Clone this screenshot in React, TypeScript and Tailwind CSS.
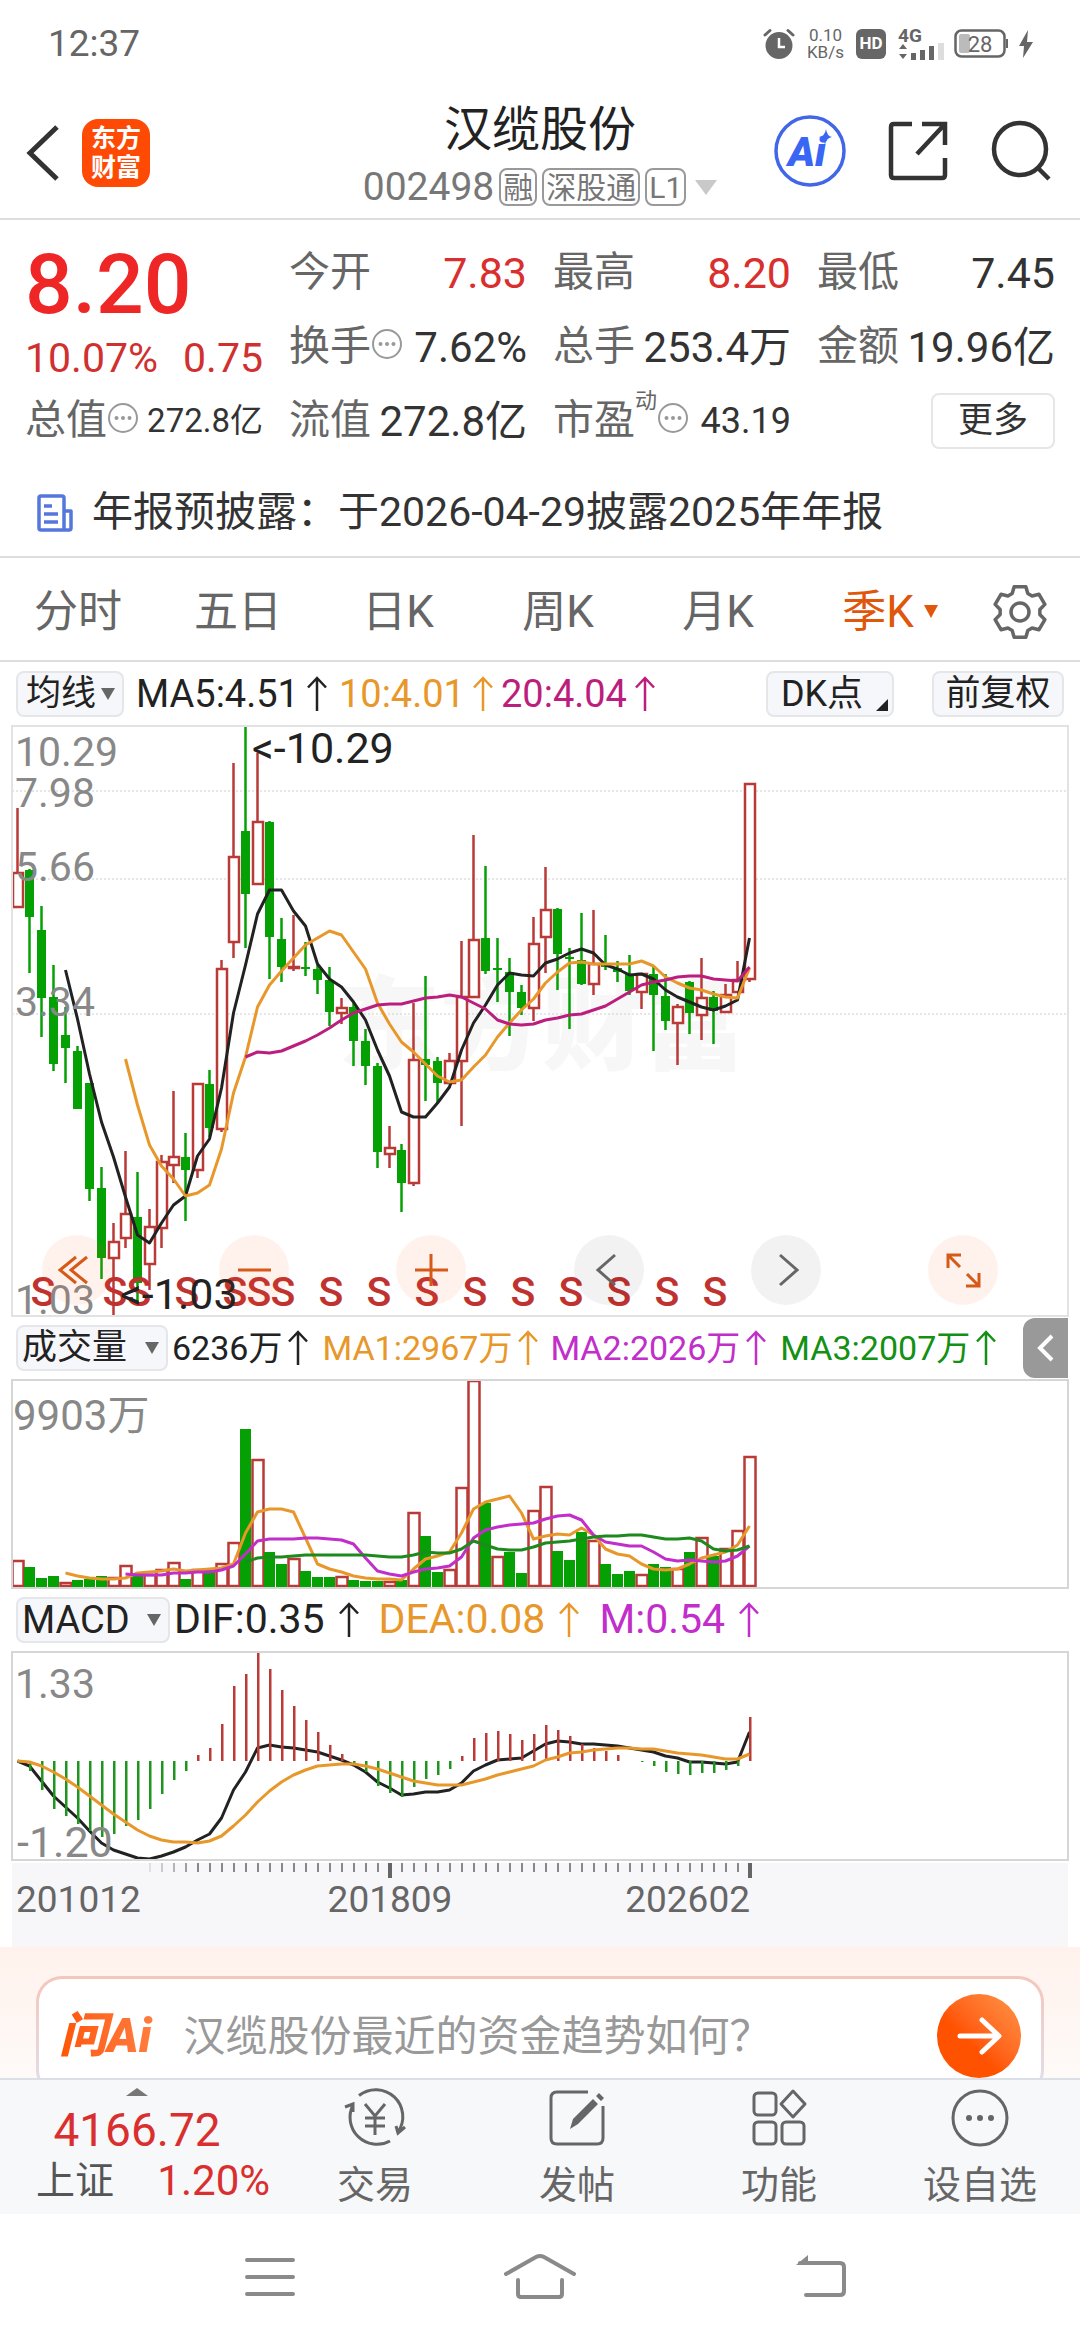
import React from "react";

// [high, body top, body bottom, low, rising]
const candles: [number, number, number, number, 0 | 1][] = [
  [82, 147, 181, 181, 1], [143, 144, 191, 247, 0], [180, 204, 272, 311, 0], [239, 271, 338, 345, 0],
  [281, 309, 322, 357, 0], [320, 325, 383, 383, 0], [357, 357, 463, 475, 0], [441, 462, 532, 553, 0],
  [497, 516, 532, 590, 1], [425, 488, 512, 522, 1], [446, 491, 557, 576, 0], [483, 501, 538, 564, 1],
  [429, 436, 502, 522, 1], [365, 431, 439, 457, 1], [407, 431, 444, 495, 0], [358, 358, 444, 452, 1],
  [344, 358, 402, 411, 0], [234, 243, 403, 406, 1], [37, 131, 216, 232, 1], [0, 105, 168, 222, 0],
  [27, 96, 158, 158, 1], [95, 96, 211, 253, 0], [192, 213, 241, 256, 0], [189, 241, 242, 245, 1],
  [216, 241, 243, 250, 0], [239, 243, 254, 268, 0], [241, 254, 286, 300, 0], [272, 282, 287, 298, 1],
  [277, 281, 315, 340, 0], [303, 315, 340, 359, 0], [337, 340, 426, 442, 0], [400, 422, 428, 442, 1],
  [418, 424, 457, 486, 0], [277, 334, 457, 460, 1], [250, 333, 339, 375, 0], [331, 335, 357, 377, 0],
  [327, 335, 357, 357, 1], [215, 271, 335, 400, 1], [109, 214, 271, 272, 1], [140, 212, 245, 248, 0],
  [212, 242, 244, 276, 0], [232, 246, 266, 310, 0], [259, 266, 282, 289, 0], [191, 218, 282, 295, 1],
  [141, 184, 211, 247, 1], [182, 183, 228, 264, 0], [222, 231, 233, 303, 0], [187, 234, 258, 259, 0],
  [184, 238, 258, 269, 1], [209, 238, 241, 244, 0], [235, 242, 246, 256, 0], [229, 248, 265, 269, 0],
  [247, 248, 266, 283, 1], [241, 248, 269, 325, 0], [248, 270, 295, 304, 0], [278, 281, 297, 339, 1],
  [255, 256, 287, 308, 0], [232, 272, 289, 314, 1], [265, 271, 285, 318, 0], [258, 269, 286, 287, 1],
  [235, 254, 266, 267, 1], [58, 58, 253, 256, 1],
];

const ma5 = [244, 293, 348, 396, 431, 471, 509, 517, 497, 479, 470, 430, 413, 362, 287, 239, 188, 164, 164, 185, 200, 238, 253, 261, 276, 294, 324, 350, 386, 391, 391, 377, 361, 324, 297, 279, 259, 247, 249, 250, 237, 233, 227, 223, 227, 239, 243, 249, 248, 253, 264, 271, 276, 281, 284, 280, 274, 212];
const ma10 = [333, 379, 419, 440, 453, 470, 467, 459, 423, 367, 331, 281, 259, 245, 232, 219, 212, 205, 209, 226, 243, 277, 298, 316, 326, 338, 350, 356, 354, 341, 329, 311, 297, 284, 273, 257, 246, 237, 236, 238, 238, 238, 238, 235, 240, 251, 257, 262, 264, 268, 271, 272, 242];
const ma20 = [331, 326, 327, 325, 320, 315, 309, 302, 294, 287, 283, 279, 278, 278, 275, 272, 271, 269, 271, 277, 283, 294, 298, 299, 298, 294, 292, 289, 288, 284, 280, 273, 266, 259, 256, 254, 251, 250, 250, 253, 254, 255, 241];

const sellMarks = [43, 115, 139, 187, 235, 259, 283, 331, 379, 427, 475, 523, 571, 619, 667, 715];

const volumes = [28, 21, 10, 12, 6, 8, 9, 12, 11, 23, 14, 14, 19, 26, 9, 19, 18, 25, 46, 159, 129, 36, 24, 30, 17, 11, 11, 12, 8, 7, 7, 7, 8, 76, 52, 16, 19, 101, 208, 85, 32, 36, 15, 78, 102, 37, 28, 56, 48, 24, 14, 17, 14, 24, 21, 20, 36, 51, 32, 40, 58, 132];
const volumeUp = [0, 4, 8, 9, 11, 12, 13, 15, 17, 18, 20, 23, 27, 31, 33, 36, 37, 38, 40, 43, 44, 48, 52, 55, 57, 59, 60, 61];
const vol1 = [193, 196, 198, 199, 199, 198, 193, 192, 191, 189, 191, 190, 189, 188, 184, 153, 132, 129, 129, 132, 158, 184, 189, 192, 196, 198, 199, 199, 200, 189, 179, 176, 172, 153, 129, 122, 119, 116, 133, 159, 156, 154, 155, 148, 155, 169, 174, 176, 184, 189, 190, 189, 184, 178, 175, 172, 165, 146];
const vol2 = [194, 195, 195, 195, 193, 193, 192, 192, 190, 186, 174, 161, 159, 159, 159, 158, 158, 159, 160, 164, 178, 191, 194, 196, 192, 189, 188, 186, 177, 158, 150, 147, 145, 144, 143, 139, 136, 135, 140, 155, 162, 164, 166, 166, 172, 179, 181, 180, 181, 182, 181, 176, 166];
const vol3 = [182, 178, 177, 177, 176, 175, 175, 175, 175, 175, 175, 176, 177, 177, 175, 172, 173, 173, 169, 161, 165, 169, 170, 170, 167, 163, 162, 161, 159, 157, 156, 156, 155, 155, 157, 159, 159, 158, 161, 169, 171, 170, 166];

const macd = [0, -10, -29, -48, -55, -63, -70, -76, -73, -65, -59, -48, -33, -19, -10, 6, 13, 37, 75, 87, 109, 92, 71, 55, 41, 29, 16, 7, -3, -11, -25, -32, -36, -26, -18, -14, -8, 5, 23, 28, 30, 27, 21, 27, 36, 31, 25, 17, 13, 10, 6, 0, -1, -5, -11, -13, -14, -12, -12, -9, -5, 44];
const dif = [109, 114, 129, 144, 155, 166, 179, 191, 198, 202, 206, 207, 204, 200, 195, 188, 182, 166, 138, 120, 96, 93, 95, 96, 98, 100, 104, 108, 113, 120, 130, 136, 143, 142, 140, 140, 138, 131, 119, 113, 108, 107, 106, 99, 92, 89, 90, 92, 92, 93, 94, 96, 98, 100, 104, 106, 110, 110, 111, 112, 110, 80];
const dea = [109, 110, 114, 120, 127, 135, 144, 153, 162, 170, 178, 184, 188, 190, 190, 191, 189, 184, 174, 163, 150, 139, 130, 123, 118, 114, 113, 112, 112, 114, 117, 121, 125, 129, 131, 133, 133, 133, 130, 127, 123, 120, 117, 114, 108, 105, 101, 100, 98, 97, 96, 96, 97, 97, 99, 101, 102, 103, 105, 107, 107, 102];

const RED = "#b93a37";
const GREEN = "#04a004";
const ORANGE = "#e8982a";

// quarter index -> x inside a chart panel
const qx = (i: number) => 5.5 + i * 12;

function Line({ data, color }: { data: number[]; color: string }) {
  const start = 62 - data.length;
  const points = data.map((y, i) => `${qx(start + i)},${y}`).join(" ");
  return <polyline points={points} fill="none" stroke={color} strokeWidth="3" strokeLinejoin="round" />;
}

function PriceChart() {
  return (
    <svg viewBox="0 0 1056 590" className="block w-full overflow-visible" role="img" aria-label="季K线图">
      <text x="326" y="336" fontSize="102" fontWeight="900" fill="#f7f7f7">东方财富</text>
      {[65, 153, 288].map((y) => (
        <line key={y} x1="0" x2="1056" y1={y} y2={y} stroke="#cfcfcf" strokeDasharray="2 2" />
      ))}
      {candles.map(([hi, top, bottom, lo, up], i) => (
        <g key={i} stroke={up ? RED : GREEN}>
          <line x1={qx(i)} x2={qx(i)} y1={hi} y2={lo} strokeWidth="2.5" />
          {up ? (
            <rect x={qx(i) - 4.5} y={top} width="10" height={bottom - top} fill="#fff" strokeWidth="2.5" />
          ) : (
            <rect x={qx(i) - 4.5} y={top} width="9" height={bottom - top} fill={GREEN} stroke="none" />
          )}
        </g>
      ))}
      <Line data={ma5} color="#222" />
      <Line data={ma10} color={ORANGE} />
      <Line data={ma20} color="#bb1e7d" />
      <g fill="#888" fontSize="41">
        <text x="3" y="40">10.29</text>
        <text x="3" y="81">7.98</text>
        <text x="3" y="155">5.66</text>
        <text x="3" y="290">3.34</text>
      </g>
      <g fill="#c0322f" fontSize="41" fontWeight="500" textAnchor="middle">
        {sellMarks.map((x) => (
          <text key={x} x={x - 12} y="580">S</text>
        ))}
      </g>
      <text x="3" y="588" fill="#888" fontSize="41">1.03</text>
      <g fill="#222" fontSize="43">
        <text x="240" y="37">&lt;-10.29</text>
        <text x="108" y="583">&lt;-1.03</text>
      </g>
    </svg>
  );
}

function VolumeChart() {
  return (
    <svg viewBox="0 0 1056 208" className="block w-full overflow-visible" role="img" aria-label="成交量图">
      {volumes.map((h, i) =>
        volumeUp.includes(i) ? (
          <rect key={i} x={qx(i) - 5} y={209 - h} width="11" height={h - 3} fill="#fff" stroke={RED} strokeWidth="2.5" />
        ) : (
          <rect key={i} x={qx(i) - 5.5} y={208 - h} width="11" height={h - 1} fill={GREEN} />
        )
      )}
      <Line data={vol1} color={ORANGE} />
      <Line data={vol2} color="#c12ec9" />
      <Line data={vol3} color="#1d8a1d" />
      <text x="1" y="50" fill="#888" fontSize="42">9903万</text>
    </svg>
  );
}

function MacdChart() {
  return (
    <svg viewBox="0 0 1056 208" className="block w-full overflow-visible" role="img" aria-label="MACD图">
      <Line data={dif} color="#222" />
      {macd.map((v, i) => (
        <rect key={i} x={qx(i) - 0.5} y={v > 0 ? 109 - v : 109} width="2.5" height={Math.abs(v)} fill={v > 0 ? RED : "#1f951f"} />
      ))}
      <Line data={dea} color={ORANGE} />
      <text x="3" y="46" fill="#888" fontSize="41">1.33</text>
      <text x="5" y="205" fill="#888" fontSize="43">-1.20</text>
    </svg>
  );
}

function TimeAxis() {
  return (
    <svg viewBox="0 0 1056 84" className="block w-full bg-[#f7f7fa]" role="img" aria-label="时间轴">
      {candles.map((_, i) => {
        if (i < 11) return null;
        const major = i === 31 || i === 61;
        return (
          <line
            key={i}
            x1={qx(i) + 0.5}
            x2={qx(i) + 0.5}
            y1="0"
            y2={major ? 15 : 9}
            stroke={major ? "#666" : "#888"}
            strokeWidth={major ? 4 : 2}
            opacity={i < 15 ? (i - 10) / 5 : 1}
          />
        );
      })}
      <g fill="#666" fontSize="37">
        <text x="4" y="49">201012</text>
        <text x="378" y="49" textAnchor="middle">201809</text>
        <text x="738" y="49" textAnchor="end">202602</text>
      </g>
    </svg>
  );
}

function UpArrow() {
  return (
    <svg viewBox="0 0 20 36" className="h-9 w-5 shrink-0" fill="none" stroke="currentColor" strokeWidth="2.5" aria-hidden>
      <path d="M10 35V2M1 11.5 10 2l9 9.5" />
    </svg>
  );
}

function Reading({ children, className }: { children: React.ReactNode; className: string }) {
  return (
    <span className={`flex items-center whitespace-nowrap ${className}`}>
      {children}
      <UpArrow />
    </span>
  );
}

function Picker({ label, options, className }: { label: string; options: string[]; className: string }) {
  return (
    <div className="relative shrink-0">
      <select
        aria-label={label}
        className={`block h-[46px] appearance-none rounded-lg border-2 border-[#e4e6ea] bg-[#f6f7fa] leading-[42px] text-[#222] ${className}`}
      >
        {options.map((o) => (
          <option key={o}>{o}</option>
        ))}
      </select>
      <svg viewBox="0 0 14 12" className="pointer-events-none absolute top-[17px] right-[9px] w-3.5" aria-hidden>
        <path d="M0 0h14L7 12z" fill="#666" />
      </svg>
    </div>
  );
}

function MoreDots({ className = "" }: { className?: string }) {
  return (
    <svg viewBox="0 0 32 32" className={`size-8 shrink-0 ${className}`} aria-hidden>
      <circle cx="16" cy="16" r="14" fill="none" stroke="#999" strokeWidth="2" />
      <g fill="#999">
        <circle cx="9.5" cy="16" r="2" />
        <circle cx="16" cy="16" r="2" />
        <circle cx="22.5" cy="16" r="2" />
      </g>
    </svg>
  );
}

function Stat({ label, value, info, sup, valueClass = "text-[42px] text-[#333]" }: { label: string; value: string; info?: boolean; sup?: string; valueClass?: string }) {
  return (
    <div className="flex items-center whitespace-nowrap">
      <span className="text-[41px] text-[#666]">{label}</span>
      {sup && <sup className="top-[-20px] text-[22px] text-[#666]">{sup}</sup>}
      {info && <MoreDots className="-mt-1.5" />}
      <span className={`ml-auto ${valueClass}`}>{value}</span>
    </div>
  );
}

function Gear() {
  const points = [0, 1, 2, 3, 4, 5]
    .flatMap((k) =>
      [[-23, 20], [-13, 26], [13, 26], [23, 20]].map(([da, r]) => {
        const a = ((k * 60 - 90 + da) * Math.PI) / 180;
        return `${28 + r * Math.cos(a)},${28 + r * Math.sin(a)}`;
      })
    )
    .join(" ");
  return (
    <svg viewBox="0 0 56 56" className="size-14" fill="none" stroke="#666" strokeWidth="3.5" strokeLinejoin="round" aria-hidden>
      <polygon points={points} />
      <circle cx="28" cy="28" r="9" />
    </svg>
  );
}

function StatusBar() {
  return (
    <div className="flex h-[88px] items-center pr-[46px] pl-12 text-[#666]">
      <time className="text-[37px]">12:37</time>
      <div className="ml-auto flex items-center">
        <svg viewBox="0 0 32 32" className="size-8" aria-hidden>
          <circle cx="16" cy="17.5" r="13.5" fill="#666" />
          <path d="M2 7l5-4.5M30 7l-5-4.5" stroke="#666" strokeWidth="3" strokeLinecap="round" />
          <path d="M16 10v9h6" fill="none" stroke="#fff" strokeWidth="2.5" />
        </svg>
        <div className="ml-3 flex flex-col text-center text-[17px] leading-[17px]">
          <span>0.10</span>
          <span>KB/s</span>
        </div>
        <span className="ml-3 flex h-[30px] w-[30px] items-center justify-center rounded-md bg-[#666] text-[17px] font-bold text-white">HD</span>
        <svg viewBox="0 0 48 32" className="ml-3 h-8 w-12 overflow-visible" fill="#666" aria-hidden>
          <text x="0" y="14" fontSize="19" fontWeight="700">4G</text>
          <path d="M5 16l4 5H1zM5 31l4-5H1zM13 25h5v7h-5zM22 22h5v10h-5zM31 18h5v14h-5z" />
          <path d="M40 15h6v17h-6z" fill="#ddd" />
        </svg>
        <svg viewBox="0 0 56 30" className="ml-2 h-[30px] w-14" aria-hidden>
          <rect x="1.5" y="1.5" width="49" height="26" rx="6" fill="none" stroke="#666" strokeWidth="2.5" />
          <rect x="5" y="5" width="11" height="19" rx="2" fill="#bbb" />
          <path d="M53 10v9" stroke="#666" strokeWidth="2" />
          <text x="26" y="22.5" fontSize="22" textAnchor="middle" fill="#666">28</text>
        </svg>
        <svg viewBox="0 0 16 28" className="ml-2 h-7 w-4" aria-hidden>
          <path d="M10 0 1 16h5L5 28l10-16H9z" fill="#666" />
        </svg>
      </div>
    </div>
  );
}

function Header() {
  const tag = "flex h-[38px] items-center rounded-lg border-2 border-[#999] px-0.5 text-[30px]";
  return (
    <header className="grid h-[132px] grid-cols-[1fr_auto_1fr] items-center border-b-2 border-[#ddd] px-6">
      <div className="flex items-center gap-[22px]">
        <button aria-label="返回">
          <svg viewBox="0 0 36 56" className="h-14 w-9" fill="none" stroke="#333" strokeWidth="5" aria-hidden>
            <path d="M33 2 6 28l27 26" />
          </svg>
        </button>
        <a href="#home" className="flex h-[68px] w-[68px] flex-col items-center justify-center rounded-2xl bg-[#ff4a05] text-[25px] leading-[29px] font-bold text-white">
          <span>东方</span>
          <span>财富</span>
        </a>
      </div>
      <div className="flex flex-col items-center pt-1">
        <h1 className="text-[48px] leading-[64px] text-[#222]">汉缆股份</h1>
        <div className="flex h-[50px] items-center gap-[5px] text-[#777]">
          <span className="text-[39px]">002498</span>
          <span className={tag}>融</span>
          <span className={tag}>深股通</span>
          <span className={tag}>L1</span>
          <svg viewBox="0 0 22 15" className="ml-1 w-[22px]" aria-hidden>
            <path d="M0 0h22L11 15z" fill="#c9c9c9" />
          </svg>
        </div>
      </div>
      <div className="flex items-center justify-end gap-[42px] pr-1 pb-1">
        <button aria-label="AI助手">
          <svg viewBox="0 0 72 72" className="size-[72px]" aria-hidden>
            <circle cx="36" cy="36" r="34" fill="none" stroke="#4166e8" strokeWidth="3.5" />
            <text x="14" y="51" fontSize="41" fontWeight="900" fontStyle="italic" fill="#3a66f5">Ai</text>
            <path d="M52 14q1 7 6 8-6 1-7 8-1-7-6-8 6-1 7-8z" fill="#3a66f5" />
          </svg>
        </button>
        <button aria-label="分享">
          <svg viewBox="0 0 60 60" className="size-[60px]" fill="none" stroke="#333" strokeWidth="4.5" aria-hidden>
            <path d="M24 3H6q-3 0-3 3v48q0 3 3 3h48q3 0 3-3V37M34 3h23v21M57 3 29 33" />
          </svg>
        </button>
        <button aria-label="搜索">
          <svg viewBox="0 0 62 62" className="size-[62px]" fill="none" stroke="#333" strokeWidth="4.5" aria-hidden>
            <circle cx="30" cy="29" r="26" />
            <path d="m48 48 11 11" />
          </svg>
        </button>
      </div>
    </header>
  );
}

function Quote() {
  return (
    <section className="border-b-2 border-[#ddd] pt-4">
      <div className="grid auto-rows-[74px] grid-cols-4 gap-x-[26px] px-[25px]">
        <div className="row-span-2 whitespace-nowrap">
          <div className="h-[98px] text-[84px] leading-[98px] font-medium text-[#ef2626]">8.20</div>
          <div className="flex justify-between text-[41px] leading-[48px] text-[#d03030]">
            <span>10.07%</span>
            <span>0.75</span>
          </div>
        </div>
        <Stat label="今开" value="7.83" valueClass="text-[43px] text-[#d92f2f]" />
        <Stat label="最高" value="8.20" valueClass="text-[43px] text-[#d92f2f]" />
        <Stat label="最低" value="7.45" valueClass="text-[43px] text-[#333]" />
        <Stat label="换手" value="7.62%" info />
        <Stat label="总手" value="253.4万" />
        <Stat label="金额" value="19.96亿" />
        <Stat label="总值" value="272.8亿" info valueClass="text-[33px] text-[#333]" />
        <Stat label="流值" value="272.8亿" />
        <Stat label="市盈" value="43.19" info sup="动" valueClass="text-[36px] text-[#333]" />
        <div className="flex items-center justify-end">
          <button className="h-14 w-[124px] rounded-lg border-2 border-[#e6e6e6] text-[35px] leading-[50px] text-[#333]">更多</button>
        </div>
      </div>
      <a href="#notice" className="flex h-[98px] items-center px-9 pt-3 text-[41px] whitespace-nowrap text-[#333]">
        <svg viewBox="0 0 38 40" className="mr-[18px] w-[38px]" fill="none" stroke="#5577dd" strokeWidth="3.5" strokeLinejoin="round" aria-hidden>
          <path d="M28 37H5q-2 0-2-2V5q0-2 2-2h21q2 0 2 2v32h5q2 0 2-2V18h-7M8 13h8M8 21h14M8 29h14" />
        </svg>
        年报预披露：于2026-04-29披露2025年年报
      </a>
    </section>
  );
}

function Periods() {
  return (
    <nav className="grid h-[104px] grid-cols-[repeat(6,4fr)_3fr] items-center border-b-2 border-[#ddd] pt-1.5 text-[44px] text-[#666]">
      {["分时", "五日", "日K", "周K", "月K"].map((t) => (
        <button key={t} className="pr-1">{t}</button>
      ))}
      <button className="relative pr-1 text-[#e0560b]">
        季K
        <svg viewBox="0 0 14 13" className="absolute top-[26px] right-[22px] w-3.5" aria-hidden>
          <path d="M0 0h14L7 13z" fill="#e0560b" />
        </svg>
      </button>
      <button aria-label="设置" className="flex justify-center">
        <Gear />
      </button>
    </nav>
  );
}

const controls = [
  { name: "快退", d: "M34 22 18 35l16 13M45 22 29 35l16 13", warm: true },
  { name: "缩小", d: "M19 35h33", warm: true },
  { name: "放大", d: "M19 35h33M35 19v32", warm: true },
  { name: "左移", d: "M41 20 24 35l17 15", warm: false },
  { name: "右移", d: "M29 20l17 15-17 15", warm: false },
  { name: "全屏", d: "M20 33V20h13M20 20l12 12M51 38v13H38M51 51 39 39", warm: true },
];

function ChartControls() {
  return (
    <div className="absolute right-[6.6%] bottom-[11px] left-[2.8%] flex justify-between">
      {controls.map((c) => (
        <button key={c.name} aria-label={c.name} className={`size-[70px] rounded-full ${c.warm ? "bg-[#ff5a1414] text-[#d55a18]" : "bg-[#0000000d] text-[#666]"}`}>
          <svg viewBox="0 0 70 70" fill="none" stroke="currentColor" strokeWidth="3" aria-hidden>
            <path d={c.d} />
          </svg>
        </button>
      ))}
    </div>
  );
}

function AskAi() {
  return (
    <section className="h-[131px] overflow-hidden bg-linear-to-b from-[#fff2ec] to-[#fefaf8] px-9 pt-[29px]">
      <form className="rounded-[26px] bg-linear-to-b from-[#f5c6bb] to-[#dfdfee] p-[3px]">
        <div className="flex h-[114px] items-center rounded-[23px] bg-white px-5">
          <span className="bg-linear-to-r from-[#ff5500] to-[#ff8040] bg-clip-text pr-2 text-[48px] leading-[60px] font-black text-transparent italic">问Ai</span>
          <input
            aria-label="问Ai"
            placeholder="汉缆股份最近的资金趋势如何？"
            className="ml-6 h-16 min-w-0 flex-1 text-[42px] outline-none placeholder:text-[#999]"
          />
          <button type="button" aria-label="发送" className="size-[84px] shrink-0 rounded-full bg-linear-to-tr from-[#ff5200] from-40% to-[#ff9545]">
            <svg viewBox="0 0 84 84" fill="none" stroke="#fff" strokeWidth="5" strokeLinecap="round" strokeLinejoin="round" aria-hidden>
              <path d="M23 42h38M45 26l17 16-17 16" />
            </svg>
          </button>
        </div>
      </form>
    </section>
  );
}

function BottomItem({ label, children }: { label: string; children: React.ReactNode }) {
  return (
    <button className="flex flex-col items-center justify-start pt-1.5 text-[38px] leading-[50px] text-[#666]">
      <svg viewBox="0 0 64 64" className="mb-2.5 size-16" fill="none" stroke="#666" strokeWidth="3" aria-hidden>
        {children}
      </svg>
      {label}
    </button>
  );
}

function BottomBar() {
  return (
    <nav className="grid h-[136px] grid-cols-[274fr_202fr_202fr_202fr_200fr] border-t-2 border-[#dcdfe5] bg-[#f7f8fa]">
      <a href="#index" className="flex flex-col items-center pt-2 text-[#d92f2f]">
        <svg viewBox="0 0 22 8" className="h-2 w-[22px]" aria-hidden>
          <path d="M11 0l11 8H0z" fill="#777" />
        </svg>
        <span className="mt-2 text-[46px] leading-[52px]">4166.72</span>
        <span className="flex w-full justify-between pr-1 pl-9 text-[42px] leading-[50px]">
          <span className="text-[39px] text-[#555]">上证</span>
          1.20%
        </span>
      </a>
      <BottomItem label="交易">
        <path d="M16 9.5A27 27 0 0 1 55 46M47 55A27 27 0 0 1 10 19M2 21l8-3v8M62 41l-7 6-2-7" />
        <path d="m22 18 10 12 10-12M32 30v19M22 32h20M22 40h20" />
      </BottomItem>
      <BottomItem label="发帖">
        <path d="M43 6H12q-6 0-6 6v40q0 6 6 6h40q6 0 6-6V20" />
        <path d="M25 43l3-10L48 13l5 5-20 20zM51 10l3-3 5 5-3 3z" fill="#666" stroke="none" />
      </BottomItem>
      <BottomItem label="功能">
        <rect x="7" y="7" width="22" height="22" rx="4" />
        <rect x="7" y="36" width="22" height="22" rx="4" />
        <rect x="35" y="36" width="22" height="22" rx="4" />
        <path d="m46 5 12 13-12 13-12-13z" strokeLinejoin="round" />
      </BottomItem>
      <BottomItem label="设自选">
        <circle cx="32" cy="32" r="27" />
        <g fill="#666" stroke="none">
          <circle cx="21" cy="32" r="3" />
          <circle cx="32" cy="32" r="3" />
          <circle cx="43" cy="32" r="3" />
        </g>
      </BottomItem>
    </nav>
  );
}

function SystemNav() {
  const icon = "h-12 w-[72px]";
  return (
    <div className="flex h-[126px] items-center justify-around px-[12.5%]">
      <button aria-label="菜单">
        <svg viewBox="0 0 72 48" className={icon} stroke="#8a8a8a" strokeWidth="4" strokeLinecap="round" aria-hidden>
          <path d="M13 7h46M13 24h46M13 41h46" />
        </svg>
      </button>
      <button aria-label="主页">
        <svg viewBox="0 0 72 48" className={icon} fill="none" stroke="#8a8a8a" strokeWidth="4" strokeLinecap="round" strokeLinejoin="round" aria-hidden>
          <path d="M2 21 32 4q4-2 8 0l30 17M14 27v14q0 3 3 3h38q3 0 3-3V27" />
        </svg>
      </button>
      <button aria-label="后退">
        <svg viewBox="0 0 72 48" className={icon} fill="none" stroke="#8a8a8a" strokeWidth="4" strokeLinecap="round" strokeLinejoin="round" aria-hidden>
          <path d="M26 10h40q4 0 4 4v24q0 4-4 4H32" />
          <path d="M34 2v10H22z" fill="#8a8a8a" stroke="none" />
        </svg>
      </button>
    </div>
  );
}

export default function App() {
  return (
    <div className="min-h-screen bg-white font-['Roboto','Noto_Sans_CJK_SC',sans-serif]">
      <StatusBar />
      <Header />
      <Quote />
      <Periods />

      {/* K线 */}
      <div className="flex h-16 items-center px-4 text-[38px]">
        <Picker label="主图指标" options={["均线", "BOLL"]} className="w-[108px] pl-2 text-[35px]" />
        <Reading className="ml-3 gap-2 text-[#222]">MA5:4.51</Reading>
        <Reading className="ml-3 gap-2 text-[#e8982a]">10:4.01</Reading>
        <Reading className="ml-2 gap-2 text-[#bb1e7d]">20:4.04</Reading>
        <button className="relative ml-auto h-[46px] w-[128px] rounded-lg border-2 border-[#e4e6ea] bg-[#f6f7fa] pr-4 text-[36px] leading-[42px] text-[#222]">
          DK点
          <svg viewBox="0 0 12 12" className="absolute right-1 bottom-1 w-3" aria-hidden>
            <path d="M12 0v12H0z" fill="#222" />
          </svg>
        </button>
        <button className="ml-[38px] h-[46px] w-[132px] rounded-lg border-2 border-[#e4e6ea] bg-[#f6f7fa] text-[35px] leading-[42px] text-[#222]">前复权</button>
      </div>
      <div className="relative mx-3 outline-2 -outline-offset-1 outline-[#e2e2e2]">
        <PriceChart />
        <ChartControls />
      </div>

      {/* 成交量 */}
      <div className="flex h-16 items-center pl-4 text-[34px]">
        <Picker label="副图指标一" options={["成交量", "成交额"]} className="w-[152px] pl-1 text-[35px]" />
        <Reading className="ml-1 gap-1.5 text-[#222]">6236万</Reading>
        <Reading className="ml-3.5 gap-1.5 text-[#e8982a]">MA1:2967万</Reading>
        <Reading className="ml-3 gap-1.5 text-[#c12ec9]">MA2:2026万</Reading>
        <Reading className="ml-3.5 gap-1.5 text-[#149014]">MA3:2007万</Reading>
        <button aria-label="展开" className="mr-3 ml-auto h-[60px] w-[45px] shrink-0 rounded-l-xl bg-[#999]">
          <svg viewBox="0 0 45 60" fill="none" stroke="#fff" strokeWidth="4" aria-hidden>
            <path d="M29 18 17 30l12 12" />
          </svg>
        </button>
      </div>
      <div className="mx-3 outline-2 -outline-offset-1 outline-[#d6d6d6]">
        <VolumeChart />
      </div>

      {/* MACD */}
      <div className="flex h-16 items-center px-4 text-[41px]">
        <Picker label="副图指标二" options={["MACD", "KDJ"]} className="w-[154px] pl-1 text-[38px]" />
        <Reading className="ml-1 gap-3.5 text-[#222]">DIF:0.35</Reading>
        <Reading className="ml-5 gap-3.5 text-[#e8982a]">DEA:0.08</Reading>
        <Reading className="ml-5 gap-3.5 text-[#c12ec9]">M:0.54</Reading>
      </div>
      <div className="mx-3 outline-2 -outline-offset-1 outline-[#d6d6d6]">
        <MacdChart />
      </div>
      <div className="mx-3 pt-[3px]">
        <TimeAxis />
      </div>

      <AskAi />
      <BottomBar />
      <SystemNav />
    </div>
  );
}
